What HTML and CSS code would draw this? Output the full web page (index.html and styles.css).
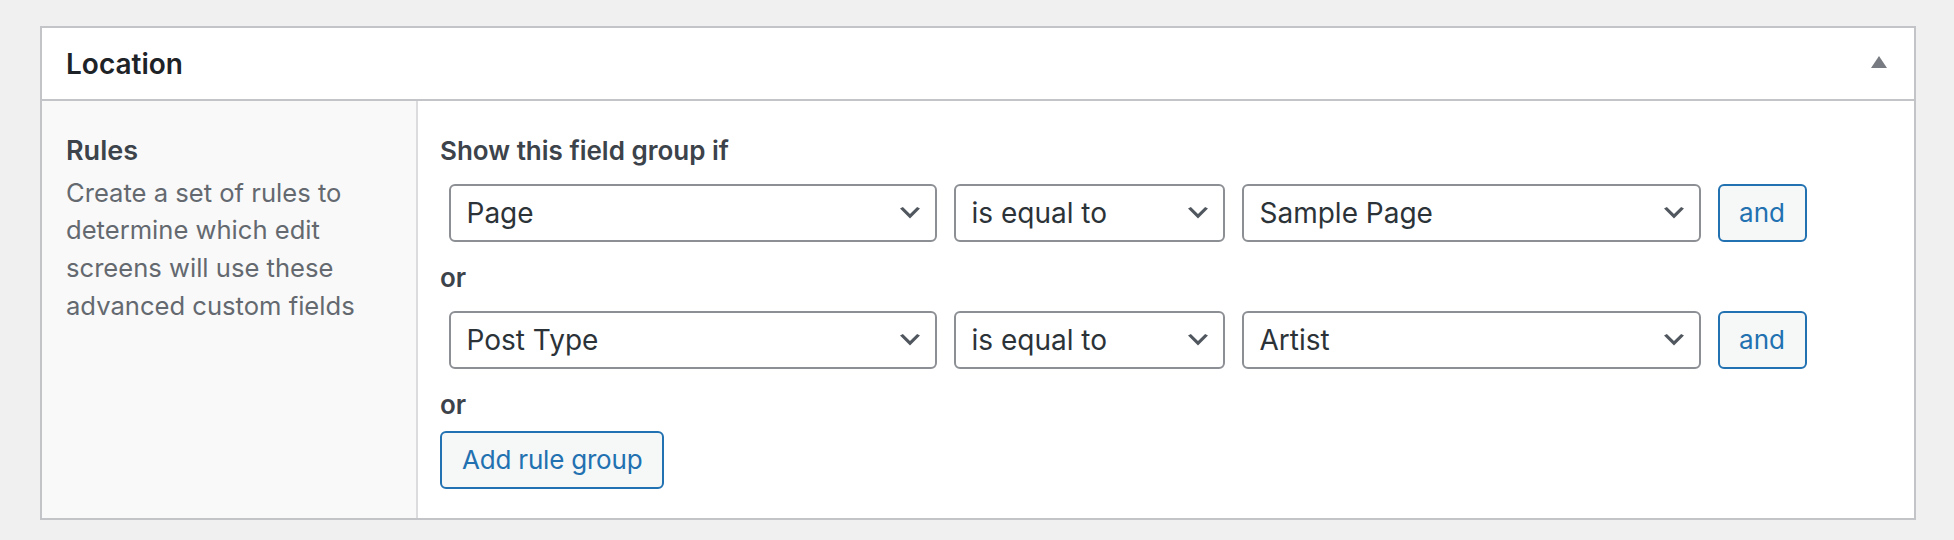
FILE: index.html
```html
<!DOCTYPE html>
<html lang="en">
<head>
<meta charset="utf-8">
<title>Location</title>
<link rel="stylesheet" href="styles.css">
</head>
<body>
<div class="postbox">
  <div class="postbox-header">
    <h2 class="postbox-title">Location</h2>
    <svg class="toggle" width="16" height="12" viewBox="0 0 16 12"><polygon points="8,0 16,12 0,12" fill="#787c82"/></svg>
  </div>
  <div class="postbox-body">
    <div class="field-label">
      <div class="label-title">Rules</div>
      <p class="label-desc">Create a set of rules to determine which edit screens will use these advanced custom fields</p>
    </div>
    <div class="field-input">
      <h4 class="group-label">Show this field group if</h4>
      <div class="rule-row">
        <div class="select sel-param"><span>Page</span><svg class="chev" width="20" height="11.4" viewBox="3 6 14 8"><path d="M5 6l5 5 5-5 2 1-7 7-7-7 2-1z" fill="#50575e"/></svg></div>
        <div class="select sel-op"><span>is equal to</span><svg class="chev" width="20" height="11.4" viewBox="3 6 14 8"><path d="M5 6l5 5 5-5 2 1-7 7-7-7 2-1z" fill="#50575e"/></svg></div>
        <div class="select sel-val"><span>Sample Page</span><svg class="chev" width="20" height="11.4" viewBox="3 6 14 8"><path d="M5 6l5 5 5-5 2 1-7 7-7-7 2-1z" fill="#50575e"/></svg></div>
        <button class="btn btn-and">and</button>
      </div>
      <h4 class="group-label or">or</h4>
      <div class="rule-row">
        <div class="select sel-param"><span>Post Type</span><svg class="chev" width="20" height="11.4" viewBox="3 6 14 8"><path d="M5 6l5 5 5-5 2 1-7 7-7-7 2-1z" fill="#50575e"/></svg></div>
        <div class="select sel-op"><span>is equal to</span><svg class="chev" width="20" height="11.4" viewBox="3 6 14 8"><path d="M5 6l5 5 5-5 2 1-7 7-7-7 2-1z" fill="#50575e"/></svg></div>
        <div class="select sel-val"><span>Artist</span><svg class="chev" width="20" height="11.4" viewBox="3 6 14 8"><path d="M5 6l5 5 5-5 2 1-7 7-7-7 2-1z" fill="#50575e"/></svg></div>
        <button class="btn btn-and">and</button>
      </div>
      <h4 class="group-label or">or</h4>
      <div class="add-row">
        <button class="btn btn-add">Add rule group</button>
      </div>
    </div>
  </div>
</div>
</body>
</html>
```

FILE: styles.css
```css
* { box-sizing: border-box; }
html, body { margin: 0; padding: 0; }
body {
  background: #f0f0f1;
  font-family: Inter, "Liberation Sans", sans-serif;
  color: #3c434a;
  padding: 26px 0 0 40px;
  height: 540px;
}
.postbox {
  width: 1876px;
  background: #fff;
  border: 2px solid #c3c4c7;
}
.postbox-header {
  height: 73px;
  border-bottom: 2px solid #c3c4c7;
  display: flex;
  align-items: center;
  justify-content: space-between;
  padding: 0 27px 0 24px;
}
.postbox-title {
  margin: 0;
  font-size: 28px;
  font-weight: 600;
  color: #1d2327;
  line-height: 36px;
  padding-top: 1px;
}
.toggle { display: block; margin-top: -4px; }
.postbox-body {
  display: flex;
  height: 417px;
}
.field-label {
  width: 376px;
  background: #f9f9f9;
  border-right: 2px solid #dcdcde;
  padding: 31.5px 20px 0 24px;
}
.label-title {
  font-size: 27px;
  font-weight: 600;
  line-height: 36px;
  color: #3c434a;
}
.label-desc {
  margin: 5px 0 0;
  font-size: 25.6px;
  line-height: 37.8px;
  color: #646970;
}
.field-input {
  flex: 1;
  padding: 31.5px 22px 0 22px;
  display: flex;
  flex-direction: column;
  align-items: flex-start;
}
.group-label {
  margin: 0;
  font-size: 26px;
  font-weight: 600;
  line-height: 36px;
  color: #3c434a;
}
.group-label.or { margin-top: 18px; }
.rule-row {
  margin-top: 15px;
  padding-left: 8.5px;
  display: flex;
  gap: 17px;
}
.select {
  height: 58px;
  border: 2px solid #8c8f94;
  border-radius: 6px;
  background: #fff;
  display: flex;
  align-items: center;
  justify-content: space-between;
  padding: 0 15px 0 16px;
  font-size: 28px;
  color: #2c3338;
}
.sel-param { width: 488px; }
.sel-op { width: 271px; }
.sel-val { width: 459px; }
.chev { display: block; margin-top: 1px; }
.btn {
  height: 58px;
  border: 2px solid #2271b1;
  border-radius: 6px;
  background: #f6f7f7;
  color: #2271b1;
  font-family: inherit;
  font-size: 26px;
  line-height: 1;
  white-space: nowrap;
  cursor: pointer;
}
.btn-and { width: 89px; padding: 0; }
.add-row { margin-top: 8px; }
.btn-add { padding: 0 20px; letter-spacing: -0.2px; }
```
